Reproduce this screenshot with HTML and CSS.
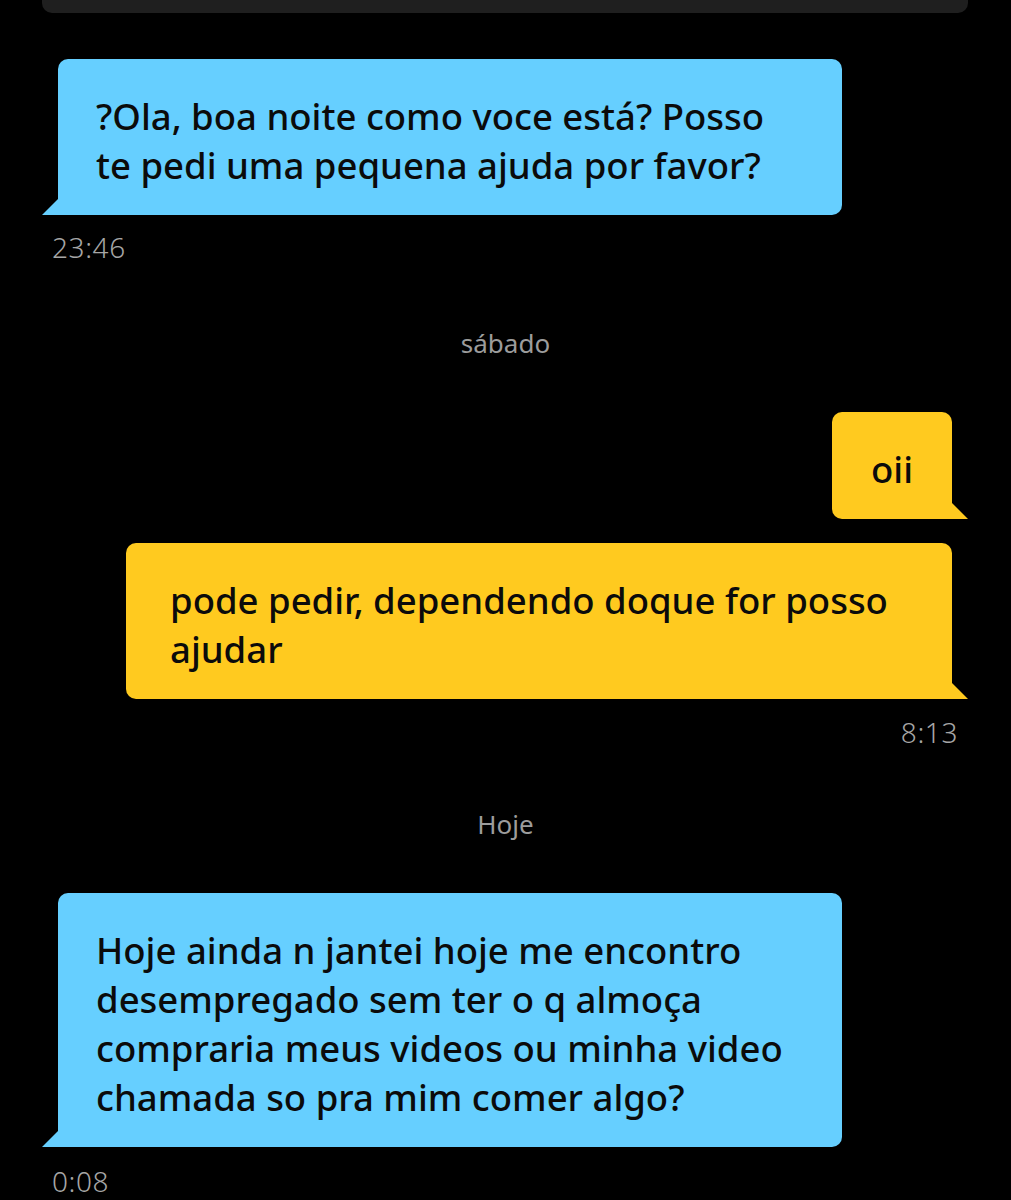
FILE: index.html
```html
<!DOCTYPE html>
<html lang="pt">
<head>
<meta charset="utf-8">
<title>Chat</title>
<link rel="stylesheet" href="styles.css">
</head>
<body>
<div class="bar"></div>
<main class="chat">
  <div class="bubble in b1">?Ola, boa noite como voce está? Posso te pedi uma pequena ajuda por favor?</div>
  <div class="time left t1">23:46</div>
  <div class="day d1">sábado</div>
  <div class="bubble out b2">oii</div>
  <div class="bubble out b3">pode pedir, dependendo doque for posso ajudar</div>
  <div class="time right t2">8:13</div>
  <div class="day d2">Hoje</div>
  <div class="bubble in b4">Hoje ainda n jantei hoje me encontro desempregado sem ter o q almoça compraria meus videos ou minha video chamada so pra mim comer algo?</div>
  <div class="time left t3">0:08</div>
</main>
</body>
</html>
```

FILE: styles.css
```css
html, body {
  margin: 0;
  padding: 0;
  background: #000;
}
body {
  font-family: "Noto Sans", "Open Sans", sans-serif;
  height: 1200px;
  overflow: hidden;
}
.bar {
  height: 13px;
  margin: 0 43px 0 42px;
  background: #1f1f1f;
  border-radius: 0 0 10px 10px;
}
.chat {
  display: flex;
  flex-direction: column;
}
.bubble {
  position: relative;
  box-sizing: border-box;
  font-size: 36.5px;
  font-weight: 500;
  line-height: 49px;
  color: #0b0b0b;
  border-radius: 10px;
  padding: 33px 50px 25px 38px;
}
.bubble.in {
  align-self: flex-start;
  margin-left: 58px;
  width: 784px;
  background: #66cfff;
  border-bottom-left-radius: 0;
}
.bubble.in::after {
  content: "";
  position: absolute;
  left: -16px;
  bottom: 0;
  border-style: solid;
  border-width: 0 0 16px 16px;
  border-color: transparent transparent #66cfff transparent;
}
.bubble.out {
  align-self: flex-end;
  margin-right: 59px;
  max-width: 826px;
  background: #ffca1f;
  border-bottom-right-radius: 0;
  padding-left: 44px;
  padding-right: 40px;
}
.bubble.out::after {
  content: "";
  position: absolute;
  right: -16px;
  bottom: 0;
  border-style: solid;
  border-width: 16px 0 0 16px;
  border-color: transparent transparent transparent #ffca1f;
}
.b1 { margin-top: 46px; }
.bubble.b2 { margin-top: 54px; padding-left: 39px; padding-right: 39px; }
.b3 { margin-top: 24px; width: 826px; }
.b4 { margin-top: 54px; }
.time {
  font-size: 28px;
  line-height: 32px;
  font-weight: 300;
  letter-spacing: 0.6px;
  color: #a6a6a6;
}
.time.left { align-self: flex-start; margin-left: 52px; }
.time.right { align-self: flex-end; margin-right: 53px; }
.t1 { margin-top: 16px; }
.t2 { margin-top: 17px; }
.t3 { margin-top: 18px; }
.day {
  align-self: center;
  font-size: 26px;
  line-height: 30px;
  color: #9c9c9c;
}
.d1 { margin-top: 65px; }
.d2 { margin-top: 61px; }
```
